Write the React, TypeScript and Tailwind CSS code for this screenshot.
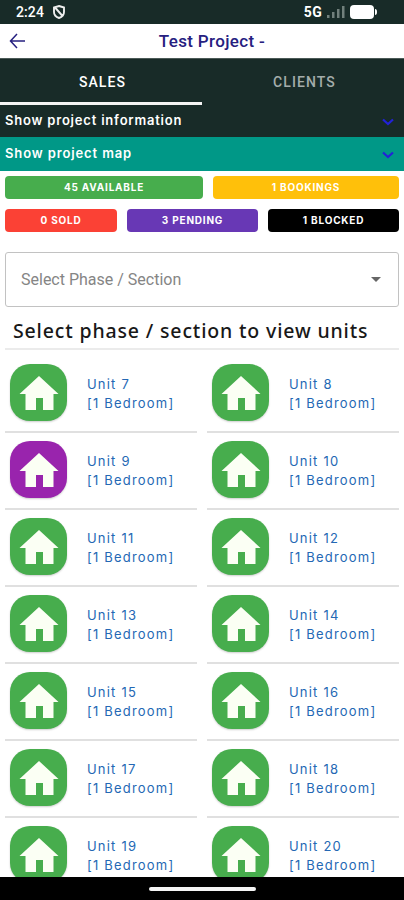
import React from "react";

const units = [7, 8, 9, 10, 11, 12, 13, 14, 15, 16, 17, 18, 19, 20];

function Chevron() {
  return (
    <svg className="mt-[2px]" width="12" height="8" viewBox="0 0 12 8" fill="none" stroke="#2222d8" strokeWidth="2.2">
      <path d="M1 1.5 6 6l5-4.5" />
    </svg>
  );
}

function Badge({ label, className }: { label: string; className: string }) {
  return (
    <div
      className={`flex h-[23px] items-center justify-center rounded-[4px] text-[10px] font-bold tracking-[0.8px] text-white ${className}`}
    >
      {label}
    </div>
  );
}

function Unit({ id }: { id: number }) {
  return (
    <div className="flex h-[77px] border-b-2 border-[#e0e0e0] pl-[5px] pt-[8px]">
      <div
        className={`flex size-[57px] shrink-0 items-center justify-center rounded-[20px] shadow-[0_1px_2px_rgba(0,0,0,0.2)] ${
          id === 9 ? "bg-[#9924ad]" : "bg-[#47ad4d]"
        }`}
      >
        <svg width="40" height="36" viewBox="0 0 40 36" fill="#fbfff4">
          <path d="M20 1 39.5 19H34.5V35H24V23H17V35H6.5V19H.5Z" />
        </svg>
      </div>
      <div className="ml-5 whitespace-nowrap pt-[11px] text-[13px] leading-[19px] tracking-[1.2px] text-[#2468b4]">
        <div>Unit {id}</div>
        <div>[1 Bedroom]</div>
      </div>
    </div>
  );
}

export default function App() {
  return (
    <div className="flex h-[900px] w-[404px] flex-col overflow-hidden bg-white font-['Inter',sans-serif]">
      <header className="flex h-6 shrink-0 items-center bg-[#182b28] pl-4 pr-[27px] font-['Roboto',sans-serif] text-white">
        <span className="text-[14px] font-medium tracking-[0.1px]">2:24</span>
        <svg className="ml-[9px]" width="12" height="14" viewBox="0 0 12 14" fill="none" stroke="#eee" strokeWidth="1.9">
          <path d="M6 1 11 2.5V7c0 3-2 5-5 6C3 12 1 10 1 7V2.5ZM2.5 3l7 8" />
        </svg>
        <span className="ml-auto text-[14px] font-bold tracking-[0.3px]">5G</span>
        <svg className="ml-[5px]" width="18" height="14" viewBox="0 0 18 14" fill="#71807c">
          <path d="M0 10h2.5v3H0zM5 7h2.5v6H5zM10 4h2.5v9H10zM15 1h2.5v12H15z" />
        </svg>
        <svg className="ml-[5px]" width="27" height="14" viewBox="0 0 27 14" fill="white">
          <rect width="24" height="14" rx="4" />
          <path d="M25 4q2 0 2 3t-2 3z" />
        </svg>
      </header>

      <div className="grid h-[34px] shrink-0 grid-cols-[40px_1fr_29px] items-center pl-[9px] font-['Roboto',sans-serif] text-[#262080]">
        <svg width="17" height="16" viewBox="0 0 17 16" fill="none" stroke="currentColor" strokeWidth="1.5">
          <path d="M8 1 1.5 8 8 15M1.5 8H16" />
        </svg>
        <h1 className="pt-[2px] text-center text-[17px] font-medium tracking-[0.35px]">Test Project -</h1>
      </div>

      <nav className="grid h-[47px] shrink-0 grid-cols-2 border-t border-[#4b5a57] bg-[#182b28] font-['Roboto',sans-serif] text-[14px] font-medium tracking-[1.1px]">
        <div className="flex items-center justify-center border-b-[3px] border-[#f4f4f4] pl-[3px] pt-[3px] text-white">SALES</div>
        <div className="flex items-center justify-center pl-[3px] text-[#a4adab]">CLIENTS</div>
      </nav>
      <div className="flex h-8 shrink-0 items-center justify-between bg-[#182b28] pl-[5px] pr-[10px] text-[13px] font-semibold text-white">
        <span className="pb-px tracking-[0.8px]">Show project information</span>
        <Chevron />
      </div>
      <div className="flex h-[34px] shrink-0 items-center justify-between bg-[#009887] pl-[5px] pr-[10px] text-[13px] font-semibold text-white">
        <span className="pb-px tracking-[0.88px]">Show project map</span>
        <Chevron />
      </div>

      <div className="mt-[5px] flex shrink-0 gap-[10px] px-[5px]">
        <Badge label="45 AVAILABLE" className="w-[198px] bg-[#47ad4d]" />
        <Badge label="1 BOOKINGS" className="flex-1 bg-[#ffc00a]" />
      </div>
      <div className="mt-[10px] flex shrink-0 gap-[10px] px-[5px]">
        <Badge label="0 SOLD" className="w-[112px] bg-[#fb4135]" />
        <Badge label="3 PENDING" className="w-[131px] bg-[#6838b5]" />
        <Badge label="1 BLOCKED" className="flex-1 bg-black" />
      </div>

      <div className="mx-[5px] mt-5 flex h-[55px] shrink-0 items-center justify-between rounded-[3px] border-[1.5px] border-[#c2c2c2] pl-[15px] pr-[17px] font-['Roboto',sans-serif] text-[16px] text-[#858585]">
        <span>Select Phase / Section</span>
        <svg width="10" height="5" viewBox="0 0 10 5" fill="#666">
          <path d="M0 0h10L5 5z" />
        </svg>
      </div>
      <h2 className="mx-[5px] flex h-[43px] shrink-0 items-center whitespace-nowrap border-b-2 border-[#ebebeb] pl-2 pt-[7px] font-['Noto_Sans',sans-serif] text-[19.5px] font-medium tracking-[0.85px] text-[#181818]">
        Select phase / section to view units
      </h2>

      <main className="min-h-0 flex-1 overflow-hidden px-[5px] pt-[6px]">
        <div className="grid grid-cols-[192px_192px] gap-x-[10px]">
          {units.map((id) => (
            <Unit key={id} id={id} />
          ))}
        </div>
      </main>
      <footer className="flex h-[23px] shrink-0 items-center justify-center bg-black">
        <div className="h-1 w-[107px] rounded-full bg-[#f5f5f5]" />
      </footer>
    </div>
  );
}
